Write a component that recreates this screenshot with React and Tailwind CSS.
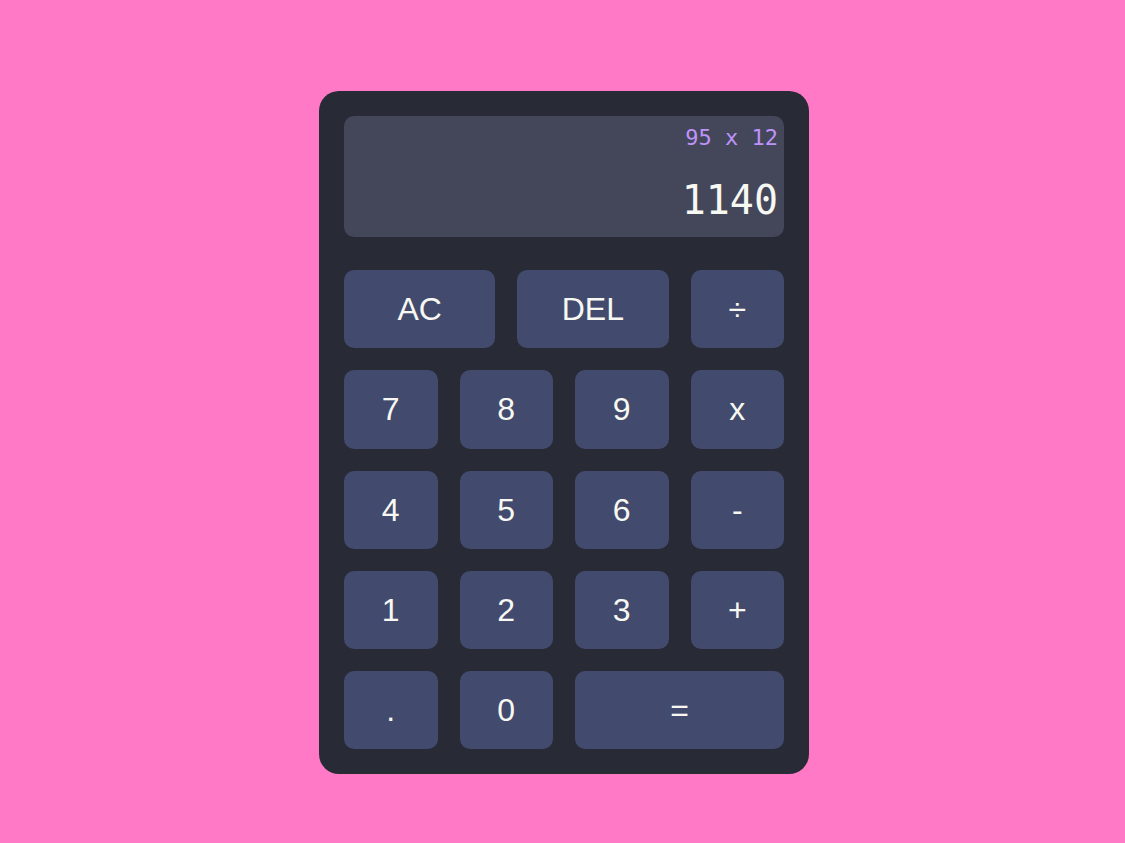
import React, { useState } from 'react';

const keys = [
    { label: 'AC', span: 'col-span-3' },
    { label: 'DEL', span: 'col-span-3' },
    { label: '÷', span: 'col-span-2' },
    { label: '7', span: 'col-span-2' },
    { label: '8', span: 'col-span-2' },
    { label: '9', span: 'col-span-2' },
    { label: 'x', span: 'col-span-2' },
    { label: '4', span: 'col-span-2' },
    { label: '5', span: 'col-span-2' },
    { label: '6', span: 'col-span-2' },
    { label: '-', span: 'col-span-2' },
    { label: '1', span: 'col-span-2' },
    { label: '2', span: 'col-span-2' },
    { label: '3', span: 'col-span-2' },
    { label: '+', span: 'col-span-2' },
    { label: '.', span: 'col-span-2' },
    { label: '0', span: 'col-span-2' },
    { label: '=', span: 'col-span-4' },
];

const App = () => {
    const [expression] = useState('95 x 12');
    const [result] = useState('1140');

    return (
        <div className="min-h-screen w-full bg-[#ff79c6] flex justify-center pl-[3px] pt-[91px]">
            <div className="w-[490px] h-[683px] bg-[#282a36] rounded-[20px] p-[25px]">
                {/* Display */}
                <div className="h-[121px] bg-[#44475a] rounded-[10px] pr-[6px] pt-[8px] flex flex-col items-end font-['DejaVu_Sans_Mono',monospace]">
                    <div className="text-[22px] leading-[28px] text-[#bd93f9]">{expression}</div>
                    <div className="mt-[24px] text-[40px] leading-[48px] text-[#f8f8f2]">{result}</div>
                </div>

                {/* Keypad */}
                <div className="mt-[33px] grid grid-cols-8 gap-[22px] font-['Liberation_Sans',Arial,sans-serif]">
                    {keys.map((k) => (
                        <button
                            key={k.label}
                            className={`${k.span} h-[78.25px] bg-[#424b6d] rounded-[10px] text-[32px] text-[#f8f8f2] flex items-center justify-center`}
                        >
                            {k.label}
                        </button>
                    ))}
                </div>
            </div>
        </div>
    );
};

export default App;
